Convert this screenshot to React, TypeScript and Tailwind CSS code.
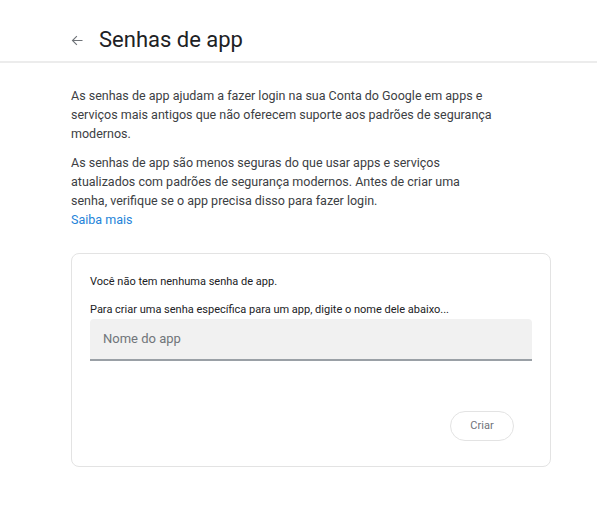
import React from "react";

export default function App() {
  return (
    <div className="min-h-screen bg-white text-[#3c4043]" style={{ fontFamily: "Roboto, 'Liberation Sans', sans-serif" }}>
      <header className="h-[63px] border-b-2 border-[#ececec] flex items-center pt-[20px] pl-[68px]">
        <button className="w-[18px] h-[18px] flex items-center justify-center text-[#6f7378]">
          <svg width="15" height="15" viewBox="0 0 24 24" fill="none" stroke="currentColor" strokeWidth="1.8">
            <path d="M20 12H5M11 5l-7 7 7 7" />
          </svg>
        </button>
        <h1 className="ml-[13px] text-[22px] text-[#202124] leading-none -mt-[2px]">Senhas de app</h1>
      </header>

      <main className="pl-[71px] pt-[23px]">
        <p className="w-[424px] text-[12.5px] leading-[19px]">
          As senhas de app ajudam a fazer login na sua Conta do Google em apps e serviços mais antigos que não oferecem suporte aos padrões de segurança modernos.
        </p>
        <p className="w-[424px] mt-[10px] text-[12.5px] leading-[19px]">
          As senhas de app são menos seguras do que usar apps e serviços atualizados com padrões de segurança modernos. Antes de criar uma senha, verifique se o app precisa disso para fazer login.
          <a className="block text-[#2383d9]">Saiba mais</a>
        </p>

        <section className="mt-[24px] w-[480px] h-[214px] border border-[#e3e3e3] rounded-lg px-[18px] pt-[20px]">
          <p className="text-[11px] leading-[16px] text-[#202124]">Você não tem nenhuma senha de app.</p>
          <p className="mt-[12px] text-[11px] leading-[16px] text-[#202124]">
            Para criar uma senha específica para um app, digite o nome dele abaixo...
          </p>
          <div className="mt-[1px] h-[42px] bg-[#f1f1f1] rounded-t border-b-2 border-[#9aa0a6] flex items-center px-[13px]">
            <span className="text-[13px] text-[#70757a]">Nome do app</span>
          </div>
          <div className="flex justify-end mt-[50px] pr-[18px]">
            <button className="w-[64px] h-[30px] rounded-full border border-[#e3e3e3] text-[11px] text-[#6f7378]">Criar</button>
          </div>
        </section>
      </main>
    </div>
  );
}
